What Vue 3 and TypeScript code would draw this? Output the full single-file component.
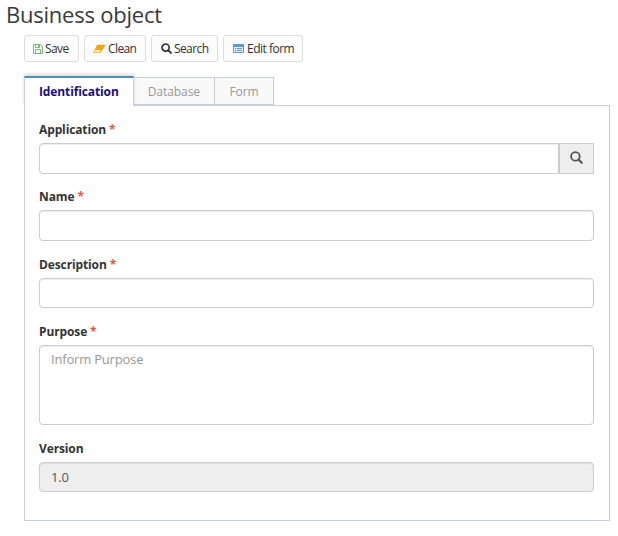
<script setup lang="ts">
import { ref } from 'vue'

const tabs = ['Identification', 'Database', 'Form']
const activeTab = ref('Identification')

const application = ref('')
const name = ref('')
const description = ref('')
const purpose = ref('')
const version = ref('1.0')
</script>

<template>
  <main class="page">
    <h1 class="title">Business object</h1>

    <div class="toolbar">
      <button class="btn save" type="button">
        <svg width="10" height="10" viewBox="0 0 10 10" fill="none" stroke="#7fb777">
          <path d="M.5 .5H7.500L9.500 2.500V9.500H.5Z" />
          <path d="M2.500 .5V3.500H6.500V.5M2.500 9.500V5.500H7.500V9.500" />
          <path d="M5.500 1V3" />
        </svg>
        <span>Save</span>
      </button>
      <button class="btn clean" type="button">
        <svg width="13" height="10" viewBox="0 0 13 10">
          <path d="M4.700 .8H12Q12.700 .8 12.300 1.500L8.500 7.600Q7.900 8.700 7 8.700H.8Q0 8.700 .5 7.900L3.700 1.500Q4.100 .8 4.700 .8Z" fill="#f9a60a" />
          <path d="M2.300 6H7.600L6.800 7.700H1.400Z" fill="#fcfcfc" />
        </svg>
        <span>Clean</span>
      </button>
      <button class="btn search" type="button">
        <svg width="11" height="11" viewBox="0 0 11 11" fill="none" stroke="#333">
          <circle cx="4.600" cy="4.600" r="3.600" stroke-width="1.700" />
          <path d="M7.200 7.200L9.900 9.900" stroke-width="2" stroke-linecap="round" />
        </svg>
        <span>Search</span>
      </button>
      <button class="btn edit" type="button">
        <svg width="11" height="9" viewBox="0 0 11 9">
          <rect width="11" height="9" rx="1" fill="#5a9acf" />
          <path d="M1 3H10V8H1Z" fill="#e3eef8" />
          <path d="M2 4.500H3M4 4.500H9M2 6.500H3M4 6.500H9" stroke="#5a9acf" />
        </svg>
        <span>Edit form</span>
      </button>
    </div>

    <div class="tabs" role="tablist">
      <button
        v-for="tab in tabs"
        :key="tab"
        type="button"
        role="tab"
        class="tab"
        :class="{ active: tab === activeTab }"
        :aria-selected="tab === activeTab"
        @click="activeTab = tab"
      >{{ tab }}</button>
    </div>

    <form class="panel" @submit.prevent>
      <div class="field">
        <label for="application">Application <i>*</i></label>
        <div class="group">
          <input id="application" v-model="application" type="text" />
          <button class="addon" type="button" aria-label="Search">
            <svg width="13" height="13" viewBox="0 0 13 13" fill="none" stroke="#555">
              <circle cx="5.400" cy="5.400" r="4.300" stroke-width="1.800" />
              <path d="M8.600 8.600L11.700 11.700" stroke-width="2.200" stroke-linecap="round" />
            </svg>
          </button>
        </div>
      </div>
      <div class="field">
        <label for="name">Name <i>*</i></label>
        <input id="name" v-model="name" type="text" />
      </div>
      <div class="field">
        <label for="description">Description <i>*</i></label>
        <input id="description" v-model="description" type="text" />
      </div>
      <div class="field">
        <label for="purpose">Purpose <i>*</i></label>
        <textarea id="purpose" v-model="purpose" placeholder="Inform Purpose"></textarea>
      </div>
      <div class="field">
        <label for="version">Version</label>
        <input id="version" v-model="version" type="text" disabled />
      </div>
    </form>
  </main>
</template>

<style>
body {
  background: #fff;
}
</style>

<style scoped>
.page,
.page * {
  box-sizing: border-box;
  font-family: 'Open Sans', 'Noto Sans', sans-serif;
}

.page {
  height: 536px;
  color: #333;
}

.title {
  height: 35px;
  margin: 0;
  padding-left: 6px;
  font-size: 22px;
  font-weight: 400;
  line-height: 29px;
  letter-spacing: -0.230px;
  color: #393939;
}

.toolbar {
  display: flex;
  gap: 5px;
  padding-left: 24px;
}

.btn {
  display: flex;
  align-items: center;
  justify-content: flex-start;
  gap: 2px;
  height: 27px;
  padding: 0 0 0 9px;
  border: 1px solid #ddd;
  border-radius: 3px;
  background: #fcfcfc;
  color: #333;
  font-size: 12px;
  line-height: 18px;
  letter-spacing: -0.600px;
  white-space: nowrap;
}

.btn span {
  padding-top: 1px;
}

.save { width: 55px; padding-left: 8px; }
.clean { width: 62px; padding-left: 8px; }
.search { width: 67px; }
.edit { width: 80px; gap: 3px; letter-spacing: -0.500px; }

.tabs {
  display: flex;
  align-items: flex-end;
  height: 29px;
  margin: 14px 0 0 24px;
}

.tab {
  height: 28px;
  margin: 0 0 0 -1px;
  padding: 1px 14.500px 0 14px;
  border: 1px solid #c5d0dc;
  background: #f9f9f9;
  color: #999;
  font-size: 12px;
  line-height: 18px;
  letter-spacing: -0.060px;
}

.tab.active {
  position: relative;
  height: 30px;
  margin: 0 0 -1px;
  padding: 0 14px;
  border-top: 2px solid #4c8fbd;
  border-bottom: 0;
  background: #fff;
  color: #1a0c85;
  font-weight: 700;
  letter-spacing: -0.120px;
  box-shadow: 0 -2px 3px rgba(0, 0, 0, 0.15);
}

.panel {
  display: flex;
  flex-direction: column;
  gap: 14.400px;
  width: 586px;
  height: 416px;
  margin-left: 24px;
  padding: 14.600px 15px 0 14px;
  border: 1px solid #c5d0dc;
}

.field {
  display: flex;
  flex-direction: column;
}

label {
  height: 22.400px;
  font-size: 12px;
  font-weight: 700;
  line-height: 19.200px;
  letter-spacing: -0.120px;
}

.field:nth-child(-n + 2) label {
  line-height: 17.600px;
}

label i {
  color: #dd5a43;
  font-style: normal;
}

input,
textarea {
  display: block;
  width: 100%;
  height: 30.500px;
  margin: 0;
  padding: 4px 11px;
  border: 1px solid #ccc;
  border-radius: 4px;
  outline: none;
  background: #fff;
  color: #555;
  box-shadow: inset 0 1px 1px rgba(0, 0, 0, 0.075);
  font-size: 13px;
  line-height: 18px;
  letter-spacing: -0.190px;
}

textarea {
  height: 80px;
  resize: none;
}

textarea::placeholder {
  color: #999;
  opacity: 1;
}

input:disabled {
  background: #eee;
}

.group {
  display: flex;
  height: 31px;
  margin-bottom: -0.500px;
}

.group input {
  flex: 1;
  height: 31px;
  border-radius: 4px 0 0 4px;
}

.addon {
  display: flex;
  align-items: center;
  justify-content: center;
  width: 35px;
  padding: 0 0 2px;
  border: 1px solid #ccc;
  background: #eee;
}
</style>
